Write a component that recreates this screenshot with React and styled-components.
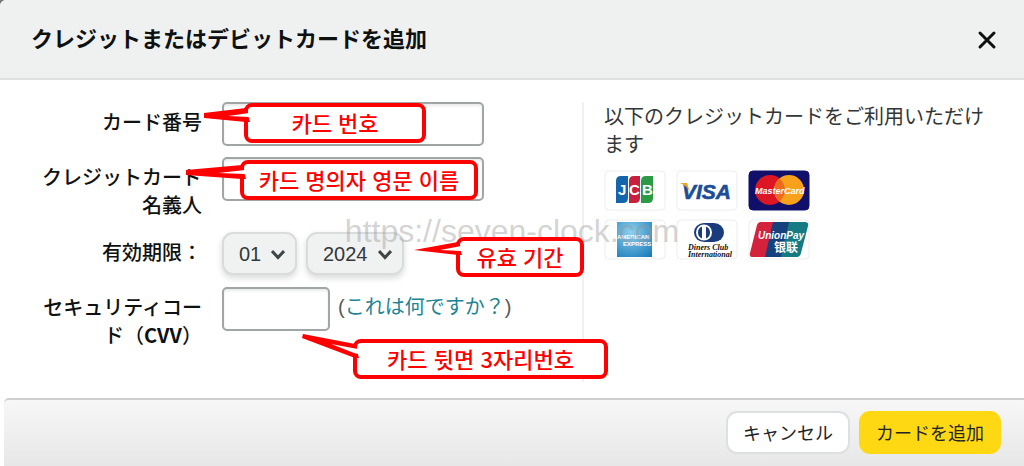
import React, { useState } from "react";
import styled, { createGlobalStyle } from "styled-components";

const GlobalStyle = createGlobalStyle`
  * {
    box-sizing: border-box;
  }
  body {
    margin: 0;
    color: #0f1111;
    font-family: "Noto Sans CJK JP", sans-serif;
    font-size: 20px;
    line-height: 28px;
  }
`;

const Page = styled.div`
  background: #777;
`;

const Dialog = styled.div`
  position: relative;
  overflow: hidden;
  background: #fff;
  border-top-left-radius: 6px;
`;

const Header = styled.header`
  display: flex;
  align-items: center;
  justify-content: space-between;
  height: 80px;
  padding: 0 24px 4px 31px;
  background: #eff1f1;
  border-bottom: 2px solid #dfe1e1;
`;

const Title = styled.h1`
  margin: 0;
  font-size: 22px;
  font-weight: 700;
  line-height: 32px;
`;

const CloseButton = styled.button`
  display: flex;
  padding: 4px 0 0;
  border: 0;
  background: none;
  cursor: pointer;
`;

const Content = styled.main`
  display: grid;
  grid-template-columns: 582fr 442fr;
  padding: 22px 0 16px;
`;

const Form = styled.form`
  display: flex;
  flex-direction: column;
  gap: 12px;
  padding-left: 32px;
`;

const Row = styled.div`
  display: grid;
  grid-template-columns: 170px 262px;
  column-gap: 20px;
`;

const Label = styled.label`
  padding-top: 6px;
  font-weight: 500;
  line-height: 28px;
  text-align: right;
`;

const Latin = styled.span`
  font-weight: 700;
`;

const Field = styled.div`
  position: relative;
  display: flex;
  align-items: flex-start;
  min-height: ${(props) => (props.$tall ? "63px" : "43px")};
  gap: ${(props) => props.$gap || "8px"};
`;

const TextInput = styled.input`
  width: ${(props) => props.$width || "100%"};
  height: 44px;
  margin-bottom: -1px;
  padding: 0 10px;
  border: 2px solid #a0a5a5;
  border-radius: 5px;
  box-shadow: inset 0 2px 3px #e8eaea;
  background: #fff;
  font: inherit;
`;

const SelectWrap = styled.div`
  position: relative;
  width: ${(props) => props.$width};
`;

const Select = styled.select`
  display: block;
  width: 100%;
  height: 43px;
  padding: 0 15px;
  appearance: none;
  border: 2px solid #d9dcdc;
  border-radius: 11px;
  background: #f0f2f2;
  box-shadow: 0 3px 6px rgba(15, 17, 17, 0.16);
  color: #333838;
  font-family: "Liberation Sans", sans-serif;
  font-size: 20px;
`;

const Chevron = styled.svg`
  position: absolute;
  top: 17px;
  right: 12px;
  pointer-events: none;
`;

const Help = styled.span`
  padding-top: 6px;
  color: #565959;
  font-family: "Liberation Sans", "Noto Sans CJK JP", sans-serif;
  white-space: nowrap;
`;

const HelpLink = styled.a`
  color: #1c8494;
  text-decoration: none;
`;

const Aside = styled.aside`
  min-height: 280px;
  padding: 0 30px 0 20px;
  border-left: 2px solid #f0f1f1;
`;

const AsideText = styled.p`
  margin: 0 0 12px;
  color: #333636;
`;

const Brands = styled.div`
  display: grid;
  grid-template-columns: repeat(3, 62px);
  gap: 8px 10px;
`;

const BrandFrame = styled.svg`
  display: block;
  width: 62px;
  height: 41px;
`;

const Footer = styled.footer`
  display: flex;
  justify-content: flex-end;
  gap: 9px;
  margin-left: 4px;
  padding: 11px 23px 12px;
  border-top: 2px solid #cfcfcf;
  border-top-left-radius: 5px;
  background: linear-gradient(#f7f7f7, #e7e7e7);
`;

const Button = styled.button`
  height: 43px;
  padding: 0 15px 2px;
  border: 2px solid ${(props) => (props.$primary ? "#ffd814" : "#dde0e0")};
  border-radius: 11px;
  background: ${(props) => (props.$primary ? "#ffd814" : "#fff")};
  color: #222525;
  font-family: inherit;
  font-size: 18px;
  line-height: 28px;
  cursor: pointer;
`;

const Watermark = styled.div`
  position: absolute;
  top: 50%;
  left: 0;
  right: 0;
  z-index: 1;
  margin-top: -20px;
  color: rgba(150, 150, 150, 0.42);
  font-family: "Liberation Sans", sans-serif;
  font-size: 32px;
  line-height: 36px;
  text-align: center;
  pointer-events: none;
`;

const Bubble = styled.div`
  position: absolute;
  z-index: 2;
  top: ${(props) => props.$top}px;
  left: ${(props) => props.$left}px;
  width: ${(props) => props.$width}px;
  height: 40px;
  border: 4px solid #f00;
  border-radius: 8px;
  background: #fff;
  color: #f00;
  font-family: "Noto Sans CJK KR", sans-serif;
  font-size: 22px;
  font-weight: 500;
  line-height: 30px;
  text-align: center;
  white-space: nowrap;
`;

const Tail = styled.svg`
  position: absolute;
  top: -6px;
  left: -64px;
  overflow: visible;
`;

// the tail's coordinates: x 60 is the outer left edge of the bubble, y 2 its top
function Callout({ children, outer, inner, ...place }) {
  return (
    <Bubble lang="ko" {...place}>
      <Tail width="68" height="36" aria-hidden="true">
        <polygon points={outer} fill="#f00" />
        <polygon points={inner} fill="#fff" />
      </Tail>
      {children}
    </Bubble>
  );
}

function Dropdown({ id, label, options, width }) {
  const [value, setValue] = useState(options[0]);
  return (
    <SelectWrap $width={width}>
      <Select id={id} aria-label={label} value={value} onChange={(e) => setValue(e.target.value)}>
        {options.map((option) => (
          <option key={option}>{option}</option>
        ))}
      </Select>
      <Chevron width="14" height="11" viewBox="0 0 14 11">
        <path d="M1 2 7 8.5 13 2" fill="none" stroke="#3f4444" strokeWidth="3" />
      </Chevron>
    </SelectWrap>
  );
}

function Brand({ name, border = "#ededed", fill = "#fff", children }) {
  return (
    <BrandFrame viewBox="0 0 62 41" role="img" aria-label={name}>
      <rect x="1" y="1" width="60" height="39" rx="4" fill={fill} stroke={border} />
      {children}
    </BrandFrame>
  );
}

function BrandList() {
  const sans = "Liberation Sans, sans-serif";
  const serif = "Liberation Serif, serif";
  return (
    <Brands>
      <Brand name="JCB">
        <path d="M17 6h7v22q0 5-5 5h-7V11q0-5 5-5z" fill="#1565ad" />
        <path d="M30 6h6v22q0 5-5 5h-6V11q0-5 5-5z" fill="#c8203f" />
        <path d="M42 6h7v22q0 5-5 5h-7V11q0-5 5-5z" fill="#2b9a45" />
        <g fill="#fff" fontFamily={sans} fontWeight="700" fontSize="15">
          <text x="14" y="25">J</text>
          <text x="25" y="25">C</text>
          <text x="38" y="25">B</text>
        </g>
      </Brand>
      <Brand name="VISA">
        <text x="6" y="29" fill="#1b4e96" stroke="#1b4e96" strokeWidth="0.6" fontFamily={sans} fontWeight="700" fontStyle="italic" fontSize="21">
          VISA
        </text>
        <path d="M4 13h7l3 9q-3-6-10-9z" fill="#e9a52c" />
      </Brand>
      <Brand name="MasterCard" border="#10106b" fill="#10106b">
        <circle cx="22" cy="20" r="15" fill="#dc1622" />
        <circle cx="41" cy="20" r="15" fill="#f9a11b" />
        <path d="M31.500 8.500a15 15 0 0 1 0 23a15 15 0 0 1 0-23z" fill="#ec6a1e" />
        <text x="7" y="24" fill="#fff" fontFamily={sans} fontWeight="700" fontStyle="italic" fontSize="9">
          MasterCard
        </text>
      </Brand>
      <Brand name="American Express">
        <defs>
          <radialGradient id="amex" cx="0.4" cy="0.3" r="0.9">
            <stop offset="0" stopColor="#8fd0ee" />
            <stop offset="1" stopColor="#167ab9" />
          </radialGradient>
        </defs>
        <rect x="13" y="3" width="35" height="35" fill="url(#amex)" />
        <g fill="#fff" fontFamily={sans} fontWeight="700" fontSize="6">
          <text x="13" y="20">AMERICAN</text>
          <text x="19" y="27">EXPRESS</text>
        </g>
      </Brand>
      <Brand name="Diners Club International">
        <rect x="18" y="4" width="30" height="19" rx="10" fill="#1b3c7c" />
        <circle cx="28" cy="13.500" r="8" fill="#fff" />
        <path d="M26 7.500a6.500 6.500 0 0 0 0 12zM30 7.500a6.500 6.500 0 0 1 0 12z" fill="#1b3c7c" />
        <g fill="#111" fontFamily={serif} fontWeight="700" fontStyle="italic" fontSize="8">
          <text x="12" y="31">Diners Club</text>
          <text x="12" y="38">International</text>
        </g>
      </Brand>
      <Brand name="UnionPay">
        <path d="M13 3h14l-8 35H5q-4 0-3-4l7-28q1-3 4-3z" fill="#d5223c" />
        <path d="M25 3h17l-8 35H17z" fill="#17417c" />
        <path d="M41 3h16q4 0 3 4l-7 27q-1 4-4 4H33z" fill="#157b83" />
        <text x="10" y="20" fill="#fff" fontFamily={sans} fontWeight="700" fontStyle="italic" fontSize="10">
          UnionPay
        </text>
        <text x="26" y="33" fill="#fff" fontFamily="Noto Sans CJK SC, sans-serif" fontWeight="700" fontSize="12">
          银联
        </text>
      </Brand>
    </Brands>
  );
}

function App() {
  return (
    <Page lang="ja">
      <GlobalStyle />
      <Dialog role="dialog" aria-labelledby="title">
        <Header>
          <Title id="title">クレジットまたはデビットカードを追加</Title>
          <CloseButton type="button" aria-label="閉じる">
            <svg width="26" height="26" viewBox="0 0 26 26">
              <path d="M6 7 20 21M20 7 6 21" stroke="#0f1111" strokeWidth="3" strokeLinecap="round" />
            </svg>
          </CloseButton>
        </Header>
        <Content>
          <Form id="card-form" onSubmit={(e) => e.preventDefault()}>
            <Row>
              <Label htmlFor="number">カード番号</Label>
              <Field>
                <TextInput id="number" />
                <Callout
                  $top={1}
                  $left={22}
                  $width={182}
                  outer="20,12 62,7 66,21 62,21 20,17"
                  inner="44,15 65,12 65,16"
                >
                  카드 번호
                </Callout>
              </Field>
            </Row>
            <Row>
              <Label htmlFor="holder">クレジットカード名義人</Label>
              <Field $tall>
                <TextInput id="holder" />
                <Callout
                  $top={3}
                  $left={18}
                  $width={238}
                  outer="6,12 62,7 66,21 62,21 6,17"
                  inner="38,15 65,12 65,16"
                >
                  카드 명의자 영문 이름
                </Callout>
              </Field>
            </Row>
            <Row>
              <Label htmlFor="month">有効期限：</Label>
              <Field $gap="9px">
                <Dropdown id="month" label="月" width="75px" options={["01", "02", "03", "04", "05", "06"]} />
                <Dropdown id="year" label="年" width="98px" options={["2024", "2025", "2026", "2027"]} />
                <Callout
                  $top={5}
                  $left={234}
                  $width={128}
                  outer="18,15 62,7 66,20 62,20"
                  inner="44,15 65,11 65,16"
                >
                  유효 기간
                </Callout>
              </Field>
            </Row>
            <Row>
              <Label htmlFor="cvv">
                セキュリティコード（<Latin>CVV</Latin>）
              </Label>
              <Field>
                <TextInput id="cvv" $width="108px" />
                <Help>
                  (<HelpLink href="#cvv-help">これは何ですか？</HelpLink>)
                </Help>
                <Callout
                  $top={52}
                  $left={131}
                  $width={255}
                  outer="10,-3 62,7 66,21 62,21 9,1"
                  inner="38,7 65,12 65,17 61,16"
                >
                  카드 뒷면 3자리번호
                </Callout>
              </Field>
            </Row>
          </Form>
          <Aside>
            <AsideText>以下のクレジットカードをご利用いただけます</AsideText>
            <BrandList />
          </Aside>
        </Content>
        <Footer>
          <Button type="button">キャンセル</Button>
          <Button type="submit" form="card-form" $primary>
            カードを追加
          </Button>
        </Footer>
        <Watermark>https://seven-clock.com</Watermark>
      </Dialog>
    </Page>
  );
}

export default App;
